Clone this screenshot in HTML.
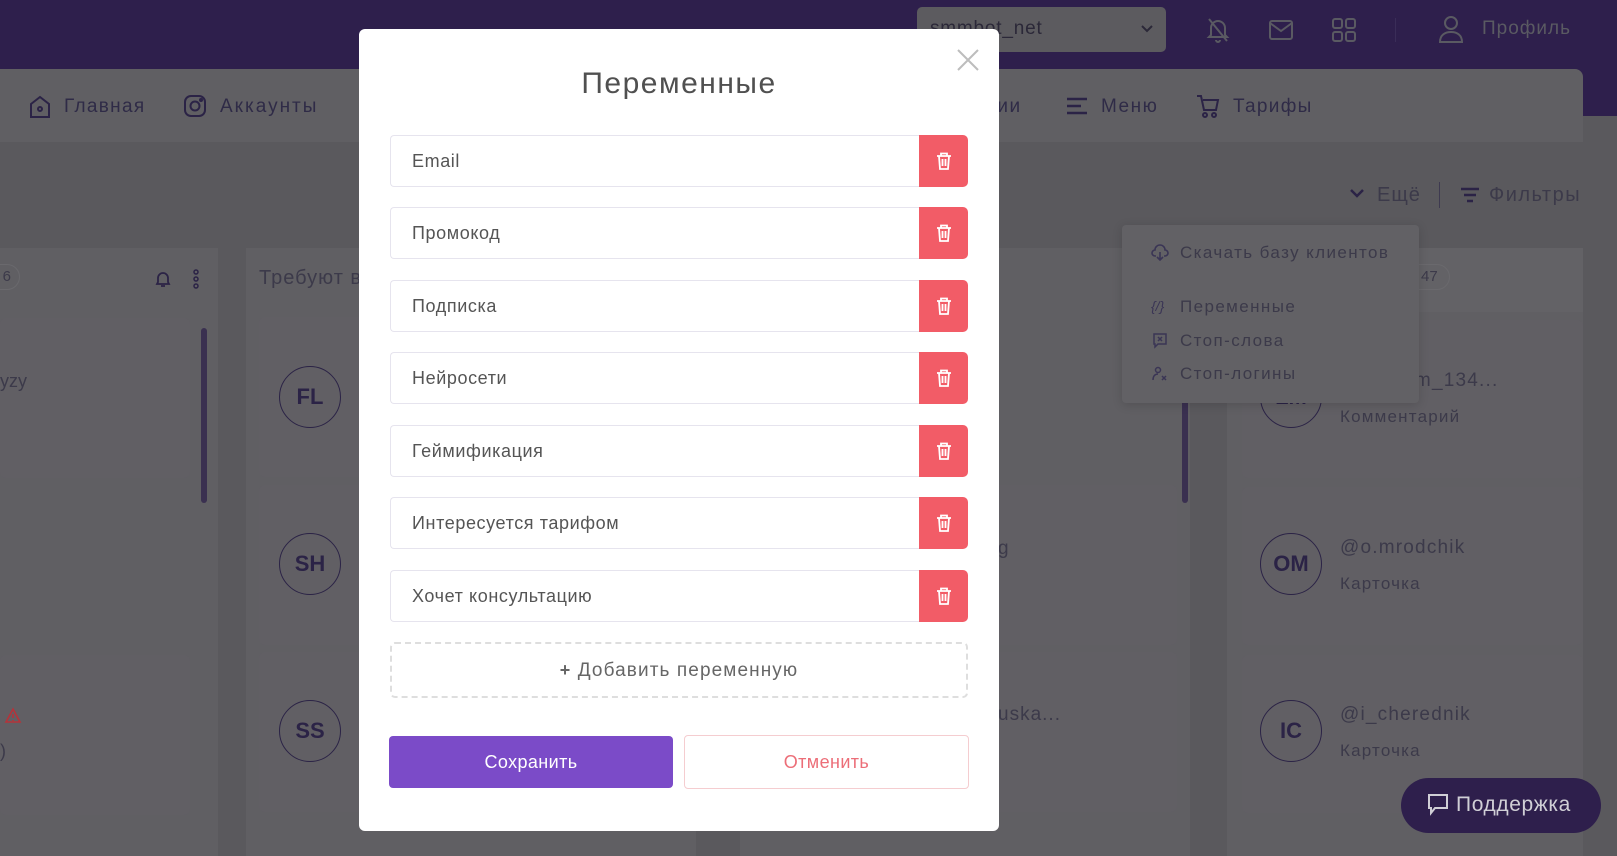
<!DOCTYPE html>
<html><head><meta charset="utf-8"><style>
*{box-sizing:border-box;margin:0;padding:0}
body{width:1617px;height:856px;overflow:hidden;background:#5a595d;font-family:"Liberation Sans",sans-serif;position:relative}
.a{position:absolute}
.dim{color:#2f2b47}
.panel{background:#605f63}
.card{background:#615f64;border-radius:6px}
.av{width:62px;height:62px;border:1.5px solid #2b2346;border-radius:50%;color:#2b2346;font-size:22px;font-weight:bold;display:flex;align-items:center;justify-content:center}
.g{color:#3c3a4a}
.inp{position:absolute;left:390px;width:529px;height:52px;border:1px solid #e6e4ee;border-right:none;border-radius:4px 0 0 4px;font-size:18px;color:#555;padding-left:21px;line-height:50px;letter-spacing:.6px}
.del{position:absolute;left:919px;width:49px;height:52px;background:#f25c67;border-radius:0 5px 5px 0;display:flex;align-items:center;justify-content:center}
</style></head><body>
<div class="a" style="left:0;top:0;width:1617px;height:69px;background:#2e1f4c"></div>
<div class="a" style="left:1560px;top:69px;width:57px;height:47px;background:#2e1f4c"></div>
<div class="a" style="left:917px;top:7px;width:249px;height:45px;background:#5c5b5f;border-radius:5px"></div>
<div class="a" style="left:930px;top:18px;font-size:19px;color:#2b2838;letter-spacing:.8px">smmbot_net</div>
<svg class="a" style="left:1139px;top:22px" width="16" height="14"><path d="M3 4l5 5 5-5" stroke="#2b2838" stroke-width="2" fill="none"/></svg>
<svg class="a" style="left:1206px;top:16px" width="24" height="28" fill="none" stroke="#5a5a62" stroke-width="2"><path d="M5 19V12a7 7 0 0 1 14 0v7l2 2H3zM10 24a2 2 0 0 0 4 0M3 3l18 22"/></svg>
<svg class="a" style="left:1268px;top:19px" width="26" height="22" fill="none" stroke="#5a5a62" stroke-width="2"><rect x="2" y="2" width="22" height="18" rx="2"/><path d="M2 4l11 8 11-8"/></svg>
<svg class="a" style="left:1331px;top:17px" width="26" height="26" fill="none" stroke="#5a5a62" stroke-width="2"><rect x="2" y="2" width="9" height="9" rx="2"/><rect x="15" y="2" width="9" height="9" rx="2"/><rect x="2" y="15" width="9" height="9" rx="2"/><rect x="15" y="15" width="9" height="9" rx="2"/></svg>
<div class="a" style="left:1395px;top:18px;width:1px;height:24px;background:#3a2d58"></div>
<svg class="a" style="left:1438px;top:15px" width="26" height="28" fill="none" stroke="#5a5a62" stroke-width="2"><circle cx="13" cy="8" r="6"/><path d="M2 27c0-7 5-10 11-10s11 3 11 10z"/></svg>
<div class="a" style="left:1482px;top:18px;font-size:19px;color:#5a5a62;letter-spacing:1px">Профиль</div>
<div class="a panel" style="left:0;top:69px;width:1583px;height:73px;border-radius:0 8px 0 0"></div>
<svg class="a" style="left:29px;top:95px" width="22" height="24" fill="none" stroke="#2b2346" stroke-width="2"><path d="M2 9l9-7 9 7v13H2z"/><circle cx="11" cy="14" r="2"/></svg>
<div class="a dim" style="left:64px;top:96px;font-size:19px;letter-spacing:1.3px">Главная</div>
<svg class="a" style="left:183px;top:94px" width="24" height="24" fill="none" stroke="#2b2346" stroke-width="2"><rect x="2" y="2" width="20" height="20" rx="6"/><circle cx="12" cy="12" r="4.5"/><circle cx="18" cy="6" r="1"/></svg>
<div class="a dim" style="left:220px;top:96px;font-size:19px;letter-spacing:2px">Аккаунты</div>
<div class="a dim" style="left:985px;top:96px;font-size:19px;letter-spacing:1.5px">ции</div>
<svg class="a" style="left:1066px;top:96px" width="22" height="20" fill="none" stroke="#2b2346" stroke-width="2.5"><path d="M1 3h20M1 10h14M1 17h20"/></svg>
<div class="a dim" style="left:1101px;top:96px;font-size:19px;letter-spacing:1.5px">Меню</div>
<svg class="a" style="left:1196px;top:94px" width="24" height="26" fill="none" stroke="#2b2346" stroke-width="2"><path d="M1 2h4l3 14h12l2-10H7"/><circle cx="9" cy="21" r="2"/><circle cx="18" cy="21" r="2"/></svg>
<div class="a dim" style="left:1233px;top:96px;font-size:19px;letter-spacing:1.3px">Тарифы</div>
<svg class="a" style="left:1349px;top:188px" width="16" height="12"><path d="M2 2l6 6 6-6" stroke="#2b2346" stroke-width="2.5" fill="none"/></svg>
<div class="a g" style="left:1377px;top:184px;font-size:20px;letter-spacing:1px">Ещё</div>
<div class="a" style="left:1439px;top:182px;width:1px;height:26px;background:#3e3a50"></div>
<svg class="a" style="left:1460px;top:187px" width="20" height="16" fill="none" stroke="#2b2346" stroke-width="2.5"><path d="M1 2h18M4 8h12M7 14h6"/></svg>
<div class="a g" style="left:1489px;top:184px;font-size:20px;letter-spacing:1.5px">Фильтры</div>
<div class="a panel" style="left:0;top:248px;width:218px;height:608px"></div>
<div class="a panel" style="left:246px;top:248px;width:450px;height:608px"></div>
<div class="a panel" style="left:740px;top:248px;width:450px;height:608px"></div>
<div class="a panel" style="left:1227px;top:248px;width:356px;height:608px"></div>
<div class="a" style="left:-20px;top:264px;width:40px;height:26px;border:1px solid #6a696d;border-radius:13px;color:#3c3a4a;font-size:15px;line-height:24px;text-align:right;padding-right:8px">6</div>
<svg class="a" style="left:155px;top:270px" width="16" height="18" fill="none" stroke="#2b2346" stroke-width="1.8"><path d="M3 12V8a5 5 0 0 1 10 0v4l1 2H2zM6 16h4"/></svg>
<svg class="a" style="left:192px;top:269px" width="8" height="20" fill="none" stroke="#2b2346" stroke-width="1.5"><circle cx="4" cy="3" r="2"/><circle cx="4" cy="10" r="2"/><circle cx="4" cy="17" r="2"/></svg>
<div class="a" style="left:201px;top:328px;width:6px;height:175px;background:#3a3050;border-radius:3px"></div>
<div class="a" style="left:1182px;top:395px;width:6px;height:108px;background:#3a3050;border-radius:3px"></div>
<div class="a g" style="left:259px;top:267px;font-size:20px;letter-spacing:1px">Требуют в</div>
<div class="a card" style="left:0;top:318px;width:190px;height:160px"></div>
<div class="a card" style="left:0;top:655px;width:190px;height:160px"></div>
<div class="a g" style="left:0;top:371px;font-size:18px">yzy</div>
<svg class="a" style="left:4px;top:707px" width="18" height="17" fill="none" stroke="#b5333a" stroke-width="1.6"><path d="M9 2l7 13H2z M9 7v4 M9 13v1"/></svg>
<div class="a g" style="left:0;top:741px;font-size:18px">)</div>
<div class="a card" style="left:259px;top:317px;width:430px;height:160px"></div>
<div class="a card" style="left:259px;top:485px;width:430px;height:160px"></div>
<div class="a card" style="left:259px;top:652px;width:430px;height:160px"></div>
<div class="a av" style="left:279px;top:366px">FL</div>
<div class="a av" style="left:279px;top:533px">SH</div>
<div class="a av" style="left:279px;top:700px">SS</div>
<div class="a card" style="left:752px;top:485px;width:425px;height:160px"></div>
<div class="a card" style="left:752px;top:652px;width:425px;height:160px"></div>
<div class="a g" style="left:998px;top:538px;font-size:19px">g</div>
<div class="a g" style="left:998px;top:704px;font-size:19px;letter-spacing:1px">uska...</div>
<div class="a" style="left:1242px;top:248px;width:341px;height:64px;background:#636266"></div>
<div class="a" style="left:1400px;top:264px;width:50px;height:26px;border:1px solid #6a696d;border-radius:13px;color:#3c3a4a;font-size:15px;line-height:24px;padding-left:20px">47</div>
<div class="a card" style="left:1242px;top:320px;width:341px;height:158px"></div>
<div class="a card" style="left:1242px;top:487px;width:341px;height:158px"></div>
<div class="a card" style="left:1242px;top:655px;width:341px;height:158px"></div>
<div class="a av" style="left:1260px;top:366px">LM</div>
<div class="a av" style="left:1260px;top:533px">OM</div>
<div class="a av" style="left:1260px;top:700px">IC</div>
<div class="a g" style="left:1340px;top:370px;font-size:19px;letter-spacing:1.2px">_lami_pm_134...</div>
<div class="a g" style="left:1340px;top:407px;font-size:17px;letter-spacing:1.2px">Комментарий</div>
<div class="a g" style="left:1340px;top:537px;font-size:19px;letter-spacing:1.2px">@o.mrodchik</div>
<div class="a g" style="left:1340px;top:574px;font-size:17px;letter-spacing:1.2px">Карточка</div>
<div class="a g" style="left:1340px;top:704px;font-size:19px;letter-spacing:1.2px">@i_cherednik</div>
<div class="a g" style="left:1340px;top:741px;font-size:17px;letter-spacing:1.2px">Карточка</div>
<div class="a" style="left:1122px;top:225px;width:297px;height:178px;background:#626165;border-radius:4px;box-shadow:0 2px 10px rgba(0,0,0,.15)"></div>
<svg class="a" style="left:1151px;top:243px" width="18" height="18" fill="none" stroke="#3a3555" stroke-width="1.6"><path d="M5 13H4a3 3 0 0 1 0-6 5 5 0 0 1 10 0 3 3 0 0 1 0 6h-1M9 9v8M6 14l3 3 3-3"/></svg>
<div class="a g" style="left:1180px;top:243px;font-size:17px;letter-spacing:1.4px">Скачать базу клиентов</div>
<div class="a" style="left:1151px;top:298px;font-size:14px;color:#3a3555;font-style:italic">{/}</div>
<div class="a g" style="left:1180px;top:297px;font-size:17px;letter-spacing:1.4px">Переменные</div>
<svg class="a" style="left:1152px;top:332px" width="16" height="18" fill="none" stroke="#3a3555" stroke-width="1.5"><path d="M2 2h12v10H6l-3 3v-3H2z M6 5l4 4M10 5l-4 4"/></svg>
<div class="a g" style="left:1180px;top:331px;font-size:17px;letter-spacing:1.4px">Стоп-слова</div>
<svg class="a" style="left:1152px;top:366px" width="16" height="18" fill="none" stroke="#3a3555" stroke-width="1.5"><circle cx="6" cy="4" r="2.5"/><path d="M1 14c0-4 2-6 5-6M10 10l4 4M14 10l-4 4"/></svg>
<div class="a g" style="left:1180px;top:364px;font-size:17px;letter-spacing:1.4px">Стоп-логины</div>
<div class="a" style="left:1401px;top:778px;width:200px;height:55px;background:#2e1f4c;border-radius:28px"></div>
<svg class="a" style="left:1427px;top:793px" width="22" height="24" fill="none" stroke="#d0cfd6" stroke-width="2"><path d="M2 2h18v13H8l-4 5v-5H2z"/></svg>
<div class="a" style="left:1456px;top:793px;font-size:21px;color:#d0cfd6;letter-spacing:.6px">Поддержка</div>
<div class="a" style="left:359px;top:29px;width:640px;height:802px;background:#fff;border-radius:6px"></div>
<div class="a" style="left:359px;top:67px;width:640px;text-align:center;font-size:30px;color:#505050;letter-spacing:1.5px">Переменные</div>
<svg class="a" style="left:957px;top:49px" width="22" height="22" stroke="#bdbdbd" stroke-width="2"><path d="M1 1l20 20M21 1L1 21"/></svg>
<div class="inp" style="top:135px">Email</div>
<div class="inp" style="top:207px">Промокод</div>
<div class="inp" style="top:280px">Подписка</div>
<div class="inp" style="top:352px">Нейросети</div>
<div class="inp" style="top:425px">Геймификация</div>
<div class="inp" style="top:497px">Интересуется тарифом</div>
<div class="inp" style="top:570px">Хочет консультацию</div>
<div class="del" style="top:135px"><svg width="16" height="18" fill="none" stroke="#fff" stroke-width="1.8"><path d="M1 4h14M5 4V1.5h6V4M3 4l1 13h8l1-13M6.5 7v7M9.5 7v7"/></svg></div>
<div class="del" style="top:207px"><svg width="16" height="18" fill="none" stroke="#fff" stroke-width="1.8"><path d="M1 4h14M5 4V1.5h6V4M3 4l1 13h8l1-13M6.5 7v7M9.5 7v7"/></svg></div>
<div class="del" style="top:280px"><svg width="16" height="18" fill="none" stroke="#fff" stroke-width="1.8"><path d="M1 4h14M5 4V1.5h6V4M3 4l1 13h8l1-13M6.5 7v7M9.5 7v7"/></svg></div>
<div class="del" style="top:352px"><svg width="16" height="18" fill="none" stroke="#fff" stroke-width="1.8"><path d="M1 4h14M5 4V1.5h6V4M3 4l1 13h8l1-13M6.5 7v7M9.5 7v7"/></svg></div>
<div class="del" style="top:425px"><svg width="16" height="18" fill="none" stroke="#fff" stroke-width="1.8"><path d="M1 4h14M5 4V1.5h6V4M3 4l1 13h8l1-13M6.5 7v7M9.5 7v7"/></svg></div>
<div class="del" style="top:497px"><svg width="16" height="18" fill="none" stroke="#fff" stroke-width="1.8"><path d="M1 4h14M5 4V1.5h6V4M3 4l1 13h8l1-13M6.5 7v7M9.5 7v7"/></svg></div>
<div class="del" style="top:570px"><svg width="16" height="18" fill="none" stroke="#fff" stroke-width="1.8"><path d="M1 4h14M5 4V1.5h6V4M3 4l1 13h8l1-13M6.5 7v7M9.5 7v7"/></svg></div>
<div class="a" style="left:390px;top:642px;width:578px;height:56px;border:2px dashed #dedede;border-radius:5px;text-align:center;line-height:52px;font-size:19px;color:#666;letter-spacing:1.1px"><b style="font-size:18px">+</b> Добавить переменную</div>
<div class="a" style="left:389px;top:736px;width:284px;height:52px;background:#7b4bc8;border-radius:4px;color:#fff;font-size:18px;text-align:center;line-height:52px;letter-spacing:.4px">Сохранить</div>
<div class="a" style="left:684px;top:735px;width:285px;height:54px;border:1px solid #f5cdd0;border-radius:4px;color:#ec6e78;font-size:18px;text-align:center;line-height:52px;letter-spacing:.4px">Отменить</div>
</body></html>
